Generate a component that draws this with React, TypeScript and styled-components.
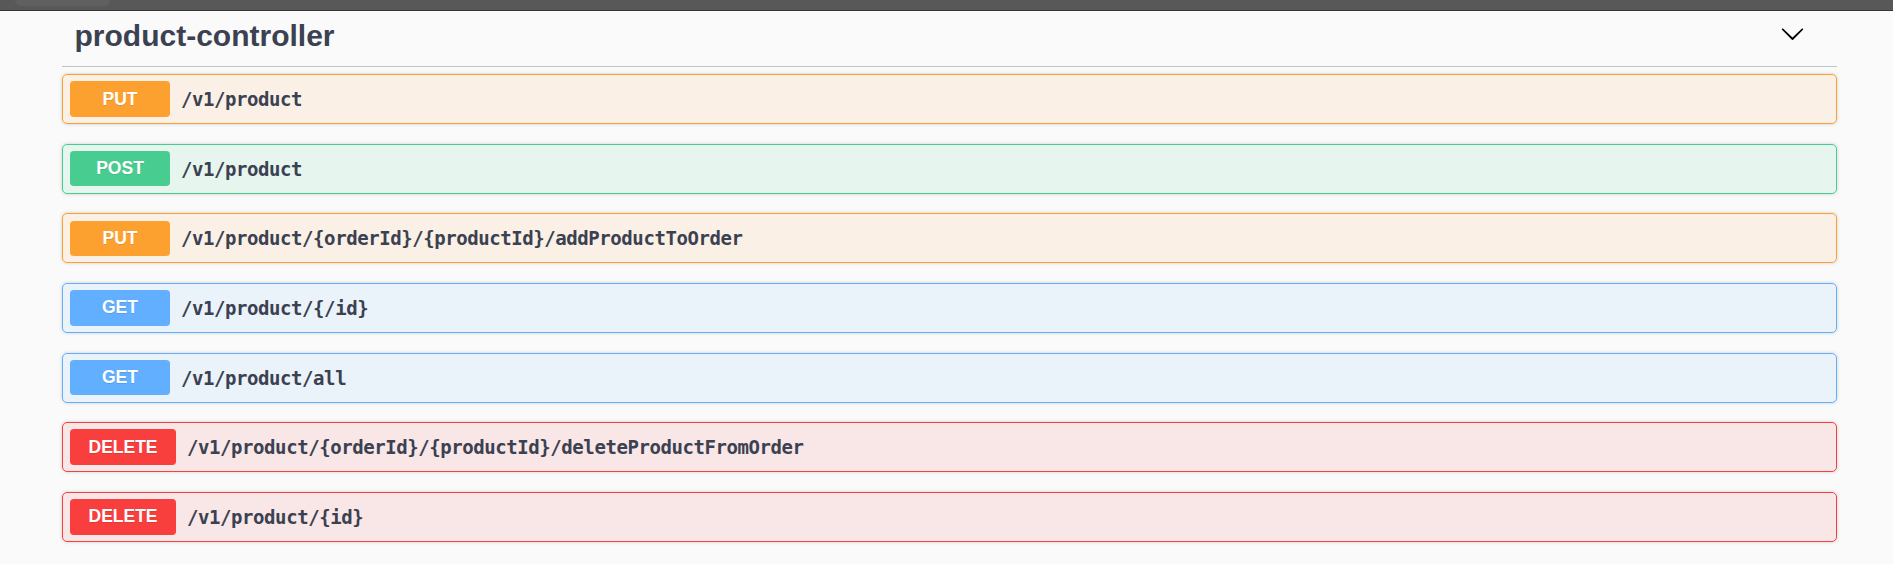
import React from "react";
import styled, { createGlobalStyle } from "styled-components";

type Method = "PUT" | "POST" | "GET" | "DELETE";

const COLORS: Record<Method, { main: string; bg: string }> = {
  PUT: { main: "#fca130", bg: "rgba(252,161,48,.1)" },
  POST: { main: "#49cc90", bg: "rgba(73,204,144,.1)" },
  GET: { main: "#61affe", bg: "rgba(97,175,254,.1)" },
  DELETE: { main: "#f93e3e", bg: "rgba(249,62,62,.1)" },
};

const GlobalStyle = createGlobalStyle`
  html, body {
    margin: 0;
    padding: 0;
    background: #fafafa;
  }
  body {
    font-family: "Liberation Sans", Arial, sans-serif;
  }
`;

const Page = styled.div`
  width: 100%;
  min-height: 564px;
  background: #fafafa;
`;

const TopBar = styled.div`
  height: 11px;
  box-sizing: border-box;
  background: #585858;
  border-bottom: 1px solid #353535;
  display: flex;
  align-items: flex-start;
`;

const BarTab = styled.div`
  margin-left: 15px;
  width: 95px;
  height: 6px;
  background: #606060;
  border-radius: 0 0 10px 10px;
`;

const Wrapper = styled.div`
  margin-left: 62px;
  width: 1775px;
`;

const TagHeader = styled.div`
  display: flex;
  align-items: flex-start;
  justify-content: space-between;
  height: 56px;
  box-sizing: border-box;
  padding: 7.6px 31.75px 0 12.5px;
  border-bottom: 1px solid rgba(59, 65, 81, 0.3);
`;

const TagTitle = styled.h3`
  margin: 0;
  font-family: "Liberation Sans", Arial, sans-serif;
  font-size: 30px;
  line-height: 34px;
  font-weight: 700;
  color: #3b4151;
`;

const ExpandButton = styled.button`
  margin-top: 2px;
  padding: 0;
  border: none;
  background: none;
  width: 25px;
  height: 25px;
  display: flex;
  cursor: pointer;
  svg {
    width: 25px;
    height: 25px;
    fill: #000;
  }
`;

const OpList = styled.div`
  padding-top: 7px;
`;

const Row = styled.div<{ $method: Method }>`
  display: flex;
  align-items: center;
  height: 50px;
  box-sizing: border-box;
  padding: 0 7px;
  margin-bottom: 19.67px;
  border: 1px solid ${(p) => COLORS[p.$method].main};
  border-radius: 5px;
  background: ${(p) => COLORS[p.$method].bg};
  box-shadow: 0 0 3.75px rgba(0, 0, 0, 0.19);
`;

const Badge = styled.span<{ $method: Method }>`
  min-width: 100px;
  height: 35.6px;
  box-sizing: border-box;
  padding: 0 18.5px;
  display: flex;
  align-items: center;
  justify-content: center;
  border-radius: 3.75px;
  background: ${(p) => COLORS[p.$method].main};
  color: #fff;
  font-family: "Liberation Sans", Arial, sans-serif;
  font-size: 17.5px;
  font-weight: 700;
  text-shadow: 0 1px 0 rgba(0, 0, 0, 0.1);
`;

const PathText = styled.span`
  padding: 0 11px;
  font-family: "DejaVu Sans Mono", "Liberation Mono", monospace;
  font-size: 19px;
  font-weight: 700;
  letter-spacing: -0.43px;
  color: #3b4151;
`;

const ops: { method: Method; path: string }[] = [
  { method: "PUT", path: "/v1/product" },
  { method: "POST", path: "/v1/product" },
  { method: "PUT", path: "/v1/product/{orderId}/{productId}/addProductToOrder" },
  { method: "GET", path: "/v1/product/{/id}" },
  { method: "GET", path: "/v1/product/all" },
  { method: "DELETE", path: "/v1/product/{orderId}/{productId}/deleteProductFromOrder" },
  { method: "DELETE", path: "/v1/product/{id}" },
];

export default function App() {
  return (
    <Page>
      <GlobalStyle />
      <TopBar>
        <BarTab />
      </TopBar>
      <Wrapper>
        <TagHeader>
          <TagTitle>product-controller</TagTitle>
          <ExpandButton aria-label="collapse">
            <svg viewBox="0 0 20 20" aria-hidden="true">
              <path d="M17.418 6.109c.272-.268.709-.268.979 0s.271.701 0 .969l-7.908 7.83c-.27.268-.707.268-.979 0l-7.908-7.83c-.27-.268-.27-.701 0-.969.271-.268.709-.268.979 0L10 13.25l7.418-7.141z" />
            </svg>
          </ExpandButton>
        </TagHeader>
        <OpList>
          {ops.map((op, i) => (
            <Row key={i} $method={op.method}>
              <Badge $method={op.method}>{op.method}</Badge>
              <PathText>{op.path}</PathText>
            </Row>
          ))}
        </OpList>
      </Wrapper>
    </Page>
  );
}
